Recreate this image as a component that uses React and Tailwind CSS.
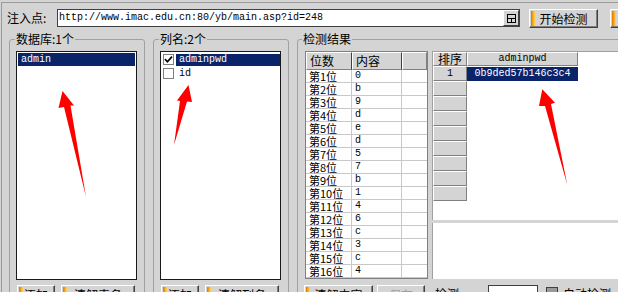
import React from 'react';

const cjk = "font-['Noto_Sans_CJK_SC',sans-serif]";
const mono = "font-['Liberation_Mono','Noto_Sans_CJK_SC',monospace] text-[10px]";

const bits = ['0', 'b', '9', 'd', 'e', 'd', '5', '7', 'b', '1', '4', '6', 'c', '3', 'c', '4'];

function Btn({ className = '', label, stripe = true, disabled = false, center = false }) {
  return (
    <div
      className={`relative shrink-0 flex justify-center ${center ? 'items-center' : 'items-start pt-[2px]'} border border-t-white border-l-white border-r-[#404040] border-b-[#404040] shadow-[inset_-1px_-1px_0_#808080] bg-[#d4d4d4] text-[12px] leading-[13px] ${disabled ? 'text-[#a0a0a0]' : 'text-black'} ${className}`}
    >
      {stripe && (
        <span className="absolute left-[1px] top-[1px] bottom-[1px] w-[4px] bg-linear-to-r from-[#e07800] via-[#f8a810] to-[#ffd85a]" />
      )}
      {label}
    </div>
  );
}

function Arrows() {
  return (
    <svg className="absolute left-0 top-0 pointer-events-none" width="618" height="292" viewBox="0 0 618 292">
      <polygon fill="#ff0000" points="62.5,91 74,105.5 70.5,105.5 86,197 64,107 58.5,108" />
      <polygon fill="#ff0000" points="188.5,85 192,102 187,101.5 174,145 180,101 177,100.5" />
      <polygon fill="#ff0000" points="542.3,89.3 555,102.7 551,104 567.3,185 545,106 539,106" />
    </svg>
  );
}

function CheckBox({ checked }) {
  return (
    <div className="w-[11px] h-[11px] shrink-0 bg-white border border-[#808080] flex items-center justify-center">
      {checked && (
        <svg width="9" height="9" viewBox="0 0 9 9">
          <path d="M1 4.2 L3.4 6.8 L8 1.6" fill="none" stroke="#000" strokeWidth="1.7" />
        </svg>
      )}
    </div>
  );
}

export default function App() {
  return (
    <div className={`relative w-[618px] h-[292px] overflow-hidden bg-[#d4d4d4] text-black ${cjk}`}>
      <div className="ml-[1px] mt-[2px] h-[290px] border-t border-l border-[#9a9a9a]">
        {/* 注入点 */}
        <div className="flex items-center h-[30px] pl-[5px]">
          <span className="w-[50px] shrink-0 text-[12px] leading-[14px]">注入点:</span>
          <div className="flex w-[463px] h-[18px] shrink-0 border border-[#404040] bg-white">
            <div className={`flex-1 pl-[1px] leading-[16px] ${mono}`}>http://www.imac.edu.cn:80/yb/main.asp?id=248</div>
            <div className="w-[16px] h-full shrink-0 bg-[#d4d4d4] border border-t-white border-l-white border-r-[#404040] border-b-[#404040] flex items-center justify-center">
              <svg width="11" height="11" viewBox="0 0 11 11">
                <rect x="1.5" y="1.5" width="8" height="8" fill="none" stroke="#000" />
                <path d="M1.5 5.5 H9.5 M5.5 5.5 V9.5" stroke="#000" />
              </svg>
            </div>
          </div>
          <Btn className="ml-[9px] w-[69px] h-[19px]" label="开始检测" center />
          <Btn className="ml-[12px] w-[80px] h-[19px]" label="" center />
        </div>

        <div className="flex items-start gap-[8px] pl-[7px]">
          {/* 数据库 */}
          <fieldset className="w-[136px] h-[275px] shrink-0 border border-[#a0a0a0] rounded-[3px] px-[6px]">
            <legend className="-ml-[1px] px-[1px] text-[12px] leading-[12px]">数据库:1个</legend>
            <div className="mt-[6px] w-[121px] h-[229px] border border-[#1a1a1a] bg-white p-[1px]">
              <div className={`h-[13px] bg-[#0a246a] text-white pl-[3px] leading-[13px] ${mono}`}>admin</div>
            </div>
            <div className="mt-[5px] ml-[1px] flex gap-[6px]">
              <Btn className="w-[38px] h-[20px]" label="添加" />
              <Btn className="w-[74px] h-[20px]" label="清解表名" />
            </div>
          </fieldset>

          {/* 列名 */}
          <fieldset className="w-[136px] h-[275px] shrink-0 border border-[#a0a0a0] rounded-[3px] px-[6px]">
            <legend className="-ml-[1px] px-[1px] text-[12px] leading-[12px]">列名:2个</legend>
            <div className="mt-[6px] w-[121px] h-[229px] border border-[#1a1a1a] bg-white pt-[1px]">
              <div className="flex items-center h-[13px] pl-[2px]">
                <CheckBox checked />
                <div className={`ml-[2px] flex-1 h-[12px] bg-[#0a246a] text-white pl-[3px] leading-[12px] ${mono}`}>adminpwd</div>
              </div>
              <div className="flex items-center h-[13px] pl-[2px] mt-[1px]">
                <CheckBox />
                <div className={`ml-[2px] flex-1 pl-[3px] leading-[12px] ${mono}`}>id</div>
              </div>
            </div>
            <div className="mt-[5px] ml-[1px] flex gap-[6px]">
              <Btn className="w-[38px] h-[20px]" label="添加" />
              <Btn className="w-[74px] h-[20px]" label="清解列名" />
            </div>
          </fieldset>

          {/* 检测结果 */}
          <fieldset className="w-[340px] h-[275px] shrink-0 border border-[#a0a0a0] rounded-[3px] pl-[7px]">
            <legend className="-ml-[3px] px-[1px] text-[12px] leading-[12px]">检测结果</legend>
            <div className="mt-[6px] flex gap-[4px] h-[228px]">
              <div className="w-[123px] h-[228px] shrink-0 border border-[#808080] bg-white flex flex-col">
                <div className="flex h-[18px] shrink-0 bg-[#d4d4d4]">
                  <div className="w-[46px] border border-t-white border-l-white border-r-[#404040] border-b-[#808080] pl-[3px] text-[12px] leading-[16px]">位数</div>
                  <div className="w-[50px] border border-t-white border-l-white border-r-[#404040] border-b-[#808080] pl-[3px] text-[12px] leading-[16px]">内容</div>
                  <div className="w-[25px] border border-t-white border-l-white border-r-[#808080] border-b-[#808080]" />
                </div>
                {bits.map((b, i) => (
                  <div key={i} className="flex h-[13px] shrink-0">
                    <div className="w-[46px] border-r border-b border-[#c8c8c8] pl-[3px] text-[11px] leading-[12px]">第{i + 1}位</div>
                    <div className={`w-[50px] border-r border-b border-[#c8c8c8] pl-[3px] leading-[12px] ${mono}`}>{b}</div>
                    <div className="w-[25px] border-b border-[#c8c8c8]" />
                  </div>
                ))}
              </div>

              <div className="flex-1 flex flex-col h-[228px]">
                <div className="h-[169px] shrink-0 bg-white border-l border-t border-[#a0a0a0]">
                  <div className="flex h-[14px]">
                    <div className="w-[34px] bg-[#d4d4d4] border border-t-white border-l-white border-r-[#808080] border-b-[#808080] text-center text-[12px] leading-[12px]">排序</div>
                    <div className={`w-[111px] bg-[#d4d4d4] border border-t-white border-l-white border-r-[#808080] border-b-[#808080] text-center leading-[12px] ${mono}`}>adminpwd</div>
                  </div>
                  <div className="flex h-[15px]">
                    <div className={`w-[34px] bg-[#d4d4d4] border border-t-white border-l-white border-r-[#808080] border-b-[#808080] text-center leading-[13px] ${mono}`}>1</div>
                    <div className={`w-[111px] mt-[1px] bg-[#0a246a] text-white text-center leading-[14px] ${mono}`}>0b9ded57b146c3c4</div>
                  </div>
                  {[0, 1, 2, 3, 4, 5, 6, 7].map((k) => (
                    <div key={k} className="w-[34px] h-[15px] bg-[#d4d4d4] border border-t-white border-l-white border-r-[#808080] border-b-[#808080]" />
                  ))}
                </div>
                <div className="h-[3px] shrink-0 bg-[#d4d4d4]" />
                <div className="flex-1 bg-white border-l border-[#a0a0a0]" />
              </div>
            </div>

            <div className="mt-[6px] -ml-[1px] flex items-start">
              <Btn className="w-[69px] h-[20px]" label="清解内容" />
              <Btn className="ml-[4px] w-[48px] h-[20px]" label="保存" stripe={false} disabled />
              <span className="ml-[10px] w-[53px] shrink-0 pt-[2px] text-[12px] leading-[13px]">检测:</span>
              <div className="w-[50px] h-[18px] shrink-0 border border-[#404040] bg-white" />
              <div className="ml-[8px] mt-[2px] w-[12px] h-[12px] shrink-0 border border-[#404040] bg-[#9a9a9a]" />
              <span className="ml-[5px] shrink-0 pt-[2px] text-[12px] leading-[13px]">自动检测</span>
            </div>
          </fieldset>
        </div>
      </div>
      <Arrows />
    </div>
  );
}
